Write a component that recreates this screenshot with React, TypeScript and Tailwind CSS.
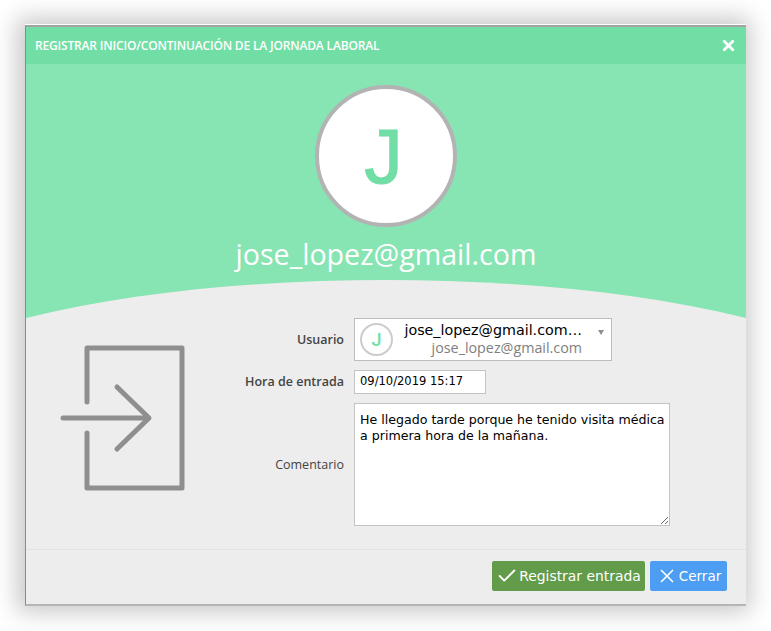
import { Check, X } from 'lucide-react';

const EntryIcon = () => (
  <svg width="130" height="148" viewBox="0 0 130 148" fill="none" stroke="#8f8f8f" strokeWidth="5" strokeLinecap="round" strokeLinejoin="round">
    <path d="M27 57V3H122V143H27V88" />
    <path d="M3 73H88" />
    <path d="M57 42L89 73L57 104" />
  </svg>
);

const App = () => {
  return (
    <div className="h-[631px] w-[771px] bg-white pl-[25px] pt-[24px] font-['Open_Sans',sans-serif]">
      <div className="flex h-[582px] w-[721px] flex-col border-t border-t-white bg-[#ededed] shadow-[-2px_0_22px_6px_rgba(0,0,0,0.22)]">
        <div className="flex h-full flex-col border-b-2 border-l border-t-2 border-b-[#b5b5b5] border-l-[#8a8a8a] border-t-[#a3a3a3]">
          <div className="flex h-[37px] shrink-0 items-center justify-between bg-[#71dea5] pl-[9px] pr-[9px]">
            <span className="text-[12px] font-semibold tracking-[-0.17px] text-white">
              REGISTRAR INICIO/CONTINUACIÓN DE LA JORNADA LABORAL
            </span>
            <X size={17} strokeWidth={4} className="text-white" />
          </div>

          <div className="relative flex h-[254px] shrink-0 flex-col items-center bg-[#87e4b3] pt-[21px]">
            <div className="z-10 flex h-[142px] w-[142px] items-center justify-center rounded-full border-4 border-[#b3b3b3] bg-white">
              <span className="mr-[5px] font-['Liberation_Sans',sans-serif] text-[77px] leading-none text-[#71dea5] blur-[0.6px] [-webkit-text-stroke:1.2px_#71dea5]">J</span>
            </div>
            <div className="z-10 mt-[8px] text-[28.6px] leading-[38px] text-white">jose_lopez@gmail.com</div>
            <svg className="absolute bottom-0 left-0" width="720" height="40" viewBox="0 0 720 40" preserveAspectRatio="none">
              <path d="M0 40C110 13 240 2 360 2C480 2 610 13 720 40Z" fill="#ededed" />
            </svg>
          </div>

          <div className="flex flex-1">
            <div className="w-[190px] shrink-0 pl-[34px] pt-[27px]">
              <EntryIcon />
            </div>
            <div className="grid grid-cols-[128px_auto] content-start items-center gap-x-[10px] gap-y-[9px] text-[12.5px] text-[#444444]">
              <label className="pt-[2px] text-right font-semibold">Usuario</label>
              <div className="flex h-[43px] w-[258px] items-center border border-[#bdbdbd] bg-white pl-[5px]">
                <div className="flex h-[33px] w-[33px] shrink-0 items-center justify-center rounded-full border-2 border-[#cccccc] bg-white">
                  <span className="font-['Roboto',sans-serif] text-[18px] font-medium text-[#71dea5]">J</span>
                </div>
                <div className="mb-[2px] flex w-[189px] flex-col items-end leading-[18px]">
                  <span className="font-['DejaVu_Sans',sans-serif] text-[14.3px] text-black">jose_lopez@gmail.com…</span>
                  <span className="text-[14.3px] text-[#808080]">jose_lopez@gmail.com</span>
                </div>
                <div className="mb-[14px] ml-[16px] h-0 w-0 border-x-[3px] border-t-[5px] border-x-transparent border-t-[#8f8f8f]" />
              </div>

              <label className="text-right font-semibold">Hora de entrada</label>
              <div className="flex h-[24px] w-[132px] items-center border border-[#c4c4c4] bg-white pl-[5px] font-['DejaVu_Sans',sans-serif] text-[11.5px] text-black">
                09/10/2019 15:17
              </div>

              <label className="pt-[2px] text-right">Comentario</label>
              <textarea
                readOnly
                className="h-[123px] w-[316px] border border-[#c4c4c4] bg-white pb-[5px] pl-[5px] pr-0 pt-[8px] font-['DejaVu_Sans',sans-serif] text-[12.6px] leading-[16px] text-black outline-none"
                value="He llegado tarde porque he tenido visita médica a primera hora de la mañana."
              />
            </div>
          </div>

          <div className="flex h-[55px] shrink-0 items-start justify-end gap-[5px] border-t border-[#e2e2e2] pr-[19px] pt-[11px]">
            <button className="flex h-[30px] w-[153px] items-center justify-center gap-[1px] rounded-[2px] bg-[#629c4a] font-['DejaVu_Sans',sans-serif] text-[13.9px] text-white">
              <Check size={22} strokeWidth={2} />
              Registrar entrada
            </button>
            <button className="flex h-[30px] w-[77px] items-center justify-center gap-[1px] rounded-[2px] bg-[#4d9df2] font-['DejaVu_Sans',sans-serif] text-[13.5px] text-white">
              <X size={22} strokeWidth={1.8} />
              Cerrar
            </button>
          </div>
        </div>
      </div>
    </div>
  );
};

export default App;
